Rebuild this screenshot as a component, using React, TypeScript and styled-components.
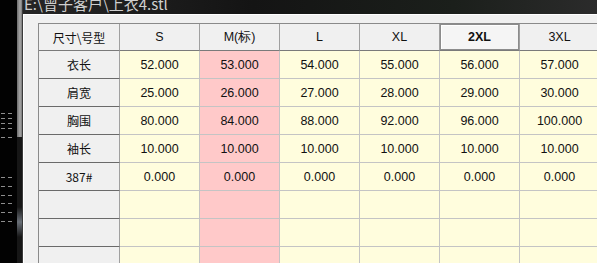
import { createGlobalStyle, styled } from "styled-components";

const GlobalStyle = createGlobalStyle`
  html, body {
    margin: 0;
    padding: 0;
    background: #000;
    overflow: hidden;
  }
  #root {
    width: 597px;
    height: 263px;
  }
`;

const sizes = ["S", "M(标)", "L", "XL", "2XL", "3XL"];
const standardIndex = 1;
const activeHeader = 4;

const rows: { name: string; values: string[] }[] = [
  { name: "衣长", values: ["52.000", "53.000", "54.000", "55.000", "56.000", "57.000"] },
  { name: "肩宽", values: ["25.000", "26.000", "27.000", "28.000", "29.000", "30.000"] },
  { name: "胸围", values: ["80.000", "84.000", "88.000", "92.000", "96.000", "100.000"] },
  { name: "袖长", values: ["10.000", "10.000", "10.000", "10.000", "10.000", "10.000"] },
  { name: "387#", values: ["0.000", "0.000", "0.000", "0.000", "0.000", "0.000"] },
  { name: "", values: ["", "", "", "", "", ""] },
  { name: "", values: ["", "", "", "", "", ""] },
  { name: "", values: ["", "", "", "", "", ""] },
];

// little bits of the desktop behind the window
const dashRows = [113, 118, 123, 128, 137, 177, 186, 195, 203, 212, 221];

export default function App() {
  return (
    <>
      <GlobalStyle />
      <Screen>
        <Backdrop>
          {dashRows.map((y, i) => (
            <Dash key={i} style={{ top: y }} />
          ))}
        </Backdrop>
        <ScrollTrack>
          <ScrollThumb />
          <ScrollGlow />
        </ScrollTrack>
        <Window>
          <TitleBar>
            <TitleText>E:\曾子客户\上衣4.stl</TitleText>
          </TitleBar>
          <Panel>
            <Grid>
              <HeadCell $first>尺寸\号型</HeadCell>
              {sizes.map((s, i) => (
                <HeadCell key={s} $active={i === activeHeader}>
                  {s}
                </HeadCell>
              ))}
              {rows.map((r, ri) => (
                <Row key={ri}>
                  <RowHead>{r.name}</RowHead>
                  {r.values.map((v, ci) => (
                    <Cell key={ci} $standard={ci === standardIndex}>
                      {v}
                    </Cell>
                  ))}
                </Row>
              ))}
            </Grid>
          </Panel>
        </Window>
      </Screen>
    </>
  );
}

const Screen = styled.div`
  display: flex;
  width: 597px;
  height: 263px;
  overflow: hidden;
  background: #000;
`;

const Backdrop = styled.div`
  position: relative;
  width: 17px;
  flex: none;
  background: #020202;
`;

const Dash = styled.div`
  position: absolute;
  left: 1px;
  width: 14px;
  height: 1px;
  background: repeating-linear-gradient(
    90deg,
    #8e8e8e 0 4px,
    transparent 4px 7px
  );
`;

const ScrollTrack = styled.div`
  width: 5px;
  flex: none;
  display: flex;
  flex-direction: column;
  background: #161616;
  border-right: 1px solid #3a3a3a;
`;

const ScrollThumb = styled.div`
  height: 137px;
  background: linear-gradient(90deg, #6c6c6c, #a8a8a8 60%, #7a7a7a);
`;

const ScrollGlow = styled.div`
  margin-top: 70px;
  height: 30px;
  background: linear-gradient(180deg, #161616, #6a7078 50%, #161616);
`;

const Window = styled.div`
  flex: 1;
  display: flex;
  flex-direction: column;
  min-width: 0;
`;

const TitleBar = styled.div`
  height: 14px;
  flex: none;
  overflow: hidden;
  background: linear-gradient(90deg, #262626 0%, #141414 40%, #1b1f1b 75%, #2b2b2b 100%);
`;

const TitleText = styled.div`
  margin-top: -5px;
  padding-left: 1px;
  font-family: "Noto Sans CJK SC", "Liberation Sans", sans-serif;
  font-size: 15px;
  line-height: 18px;
  color: #cfcfcf;
  white-space: nowrap;
`;

const Panel = styled.div`
  flex: 1;
  background: #f0f0f0;
  border-top: 1px solid #ffffff;
  border-left: 1px solid #ffffff;
  padding: 8px 0 0 14px;
  overflow: hidden;
`;

const Grid = styled.div`
  display: grid;
  grid-template-columns: 81px repeat(6, 80px);
  grid-auto-rows: 28px;
  grid-template-rows: 27px;
  border-top: 1px solid #8a8a8a;
  border-left: 1px solid #8a8a8a;
  width: max-content;
  font-family: "Liberation Sans", "Noto Sans CJK SC", sans-serif;
  font-size: 12.5px;
  color: #111;
`;

const Row = styled.div`
  display: contents;
`;

const CellBase = styled.div`
  display: flex;
  align-items: center;
  justify-content: center;
  box-sizing: border-box;
  white-space: nowrap;
`;

const HeadCell = styled(CellBase)<{ $first?: boolean; $active?: boolean }>`
  background: ${(p) => (p.$active ? "#f5f5f5" : "#f0f0f0")};
  border-right: 1px solid #a0a0a0;
  border-bottom: 1px solid #7a7a7a;
  font-family: ${(p) =>
    p.$first ? `"Noto Sans CJK SC", sans-serif` : `"Liberation Sans", sans-serif`};
  font-size: ${(p) => (p.$first ? "12px" : "12.5px")};
  font-weight: ${(p) => (p.$active ? 700 : 400)};
  ${(p) =>
    p.$active &&
    `box-shadow: inset 1px 1px 0 #8c8c8c, inset -1px -1px 0 #8c8c8c, inset 2px 2px 0 #ffffff;`}
`;

const RowHead = styled(CellBase)`
  background: #f0f0f0;
  border-right: 1px solid #a0a0a0;
  border-bottom: 1px solid #6a6a6a;
  font-family: "Noto Sans CJK SC", "Liberation Sans", sans-serif;
  font-size: 12px;
`;

const Cell = styled(CellBase)<{ $standard?: boolean }>`
  background: ${(p) => (p.$standard ? "#ffc9c9" : "#fffddd")};
  border-right: 1px solid #c4c4c4;
  border-bottom: 1px solid #c4c4c4;
`;
